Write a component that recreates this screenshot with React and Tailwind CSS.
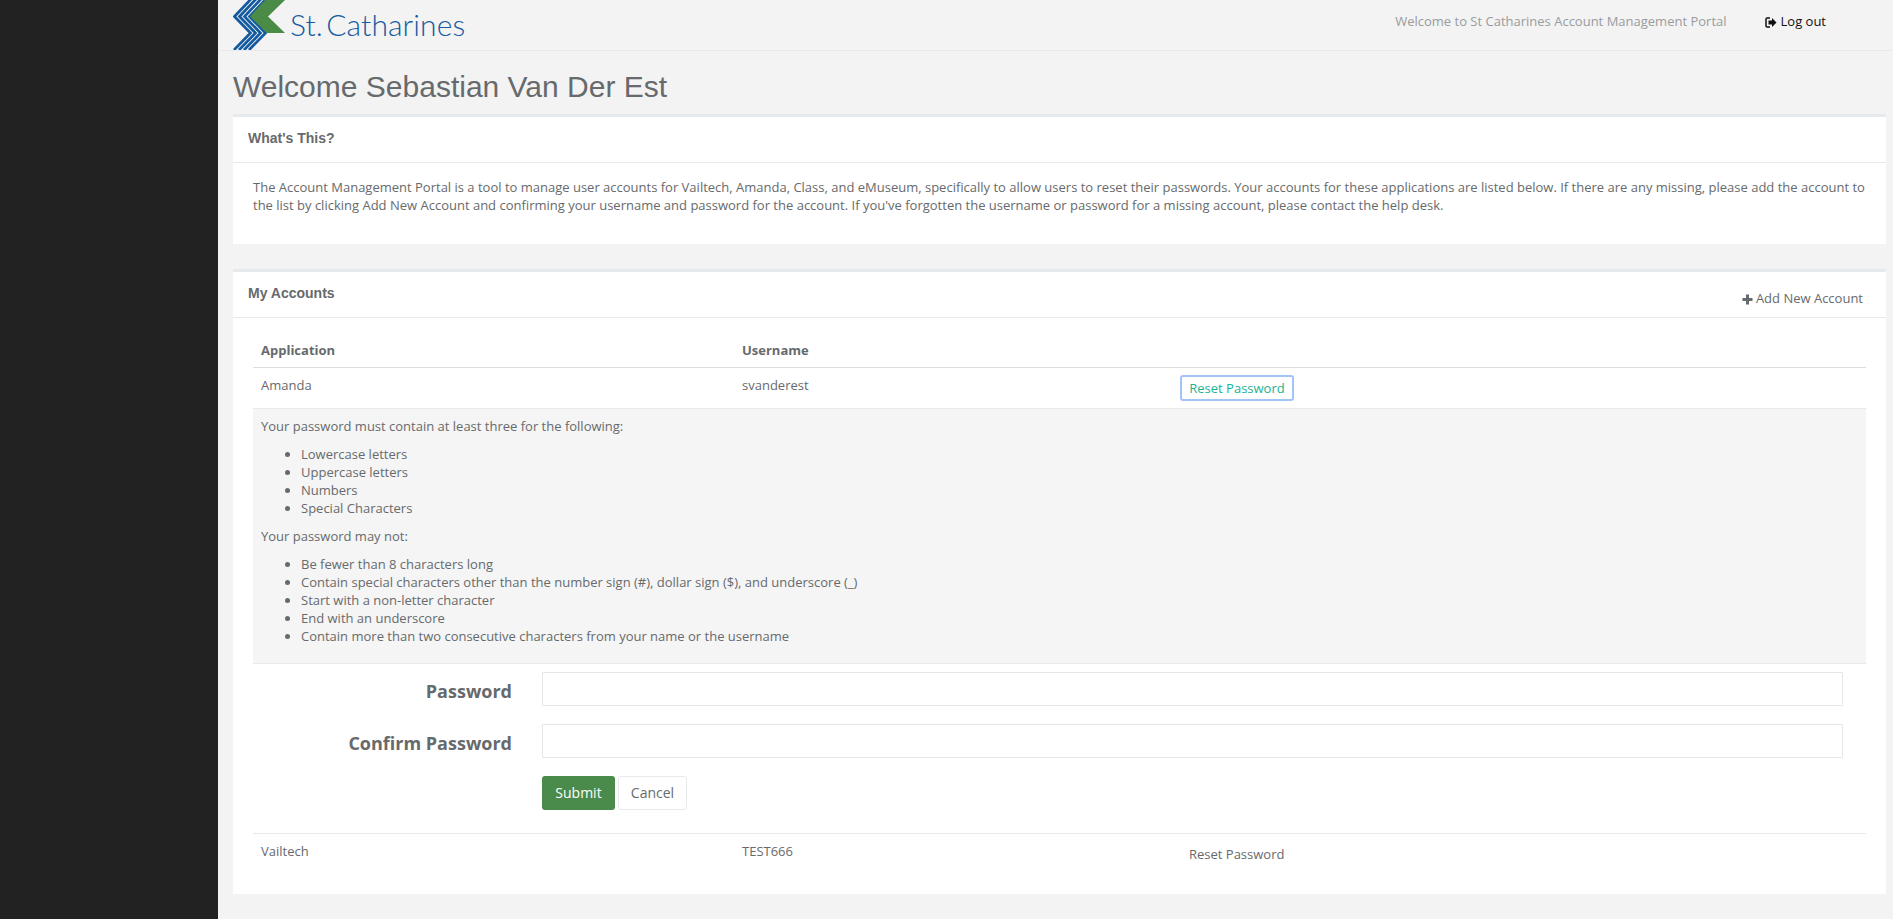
const sans = 'font-["Open_Sans",sans-serif]';

function Logo() {
  const offsets = [0, 5, 10, 15];
  return (
    <div className="flex items-center h-[50px] overflow-hidden">
      <svg width="54" height="50" viewBox="0 0 54 50" className="shrink-0">
        {offsets.map((d) => (
          <polyline
            key={d}
            points={`${19 + d},-2 ${1.5 + d},16.5 ${17.5 + d},33 ${1 + d},50`}
            fill="none"
            stroke="#135a9f"
            strokeWidth="2.7"
          />
        ))}
        <polygon points="32,0 52,0 35,16.5 52,33 34,33 17,16.5" fill="#4a8b46" />
      </svg>
      <span className={`ml-[3px] mt-[-3px] font-["Lato",sans-serif] font-light text-[30px] leading-none tracking-[0.1px] [word-spacing:-5px] text-[#135a9f]`}>St. Catharines</span>
    </div>
  );
}

function LogoutIcon() {
  return (
    <svg width="12" height="11" viewBox="0 0 12 11" className="shrink-0">
      <path d="M5 1H2.2C1.5 1 1 1.5 1 2.2v6.6C1 9.5 1.5 10 2.2 10H5" fill="none" stroke="#111" strokeWidth="1.5" />
      <path d="M3.5 3.5H7V1l4.5 4.5L7 10V7.5H3.5z" fill="#111" />
    </svg>
  );
}

function PlusIcon() {
  return (
    <svg width="11" height="11" viewBox="0 0 11 11" className="shrink-0">
      <path d="M4 0.5h3v3.5h3.5v3H7v3.5H4V7H0.5V4H4z" fill="#676a6c" />
    </svg>
  );
}

function Card({ title, action, className, children }) {
  return (
    <div className={`bg-white border-t-[3px] border-[#e7eaec] ${className}`}>
      <div className="flex justify-between h-[46px] border-b border-[#e7eaec] pl-[15px] pr-[23px]">
        <h5 className='mt-[12px] font-["Liberation_Sans",sans-serif] font-bold text-[14px] leading-[18px] text-[#676a6c]'>{title}</h5>
        {action}
      </div>
      {children}
    </div>
  );
}

const rules = ['Lowercase letters', 'Uppercase letters', 'Numbers', 'Special Characters'];
const notAllowed = [
  'Be fewer than 8 characters long',
  'Contain special characters other than the number sign (#), dollar sign ($), and underscore (_)',
  'Start with a non-letter character',
  'End with an underscore',
  'Contain more than two consecutive characters from your name or the username',
];

function BulletList({ items }) {
  return (
    <ul className="list-disc pl-[40px] mt-[10px] mb-[10px]">
      {items.map((item) => (
        <li key={item} className="leading-[18px]">{item}</li>
      ))}
    </ul>
  );
}

export default function App() {
  return (
    <div className={`flex h-[919px] overflow-hidden bg-[#f3f3f3] text-[13px] text-[#676a6c] ${sans}`}>
      <div className="w-[218px] shrink-0 bg-[#222222]" />
      <div className="flex-1 min-w-0">
        {/* Top bar */}
        <div className="flex justify-between h-[51px] border-b border-[#e7eaec] pl-[15px] pr-[67px]">
          <Logo />
          <div className="flex items-center h-[44px]">
            <span className="text-[#999c9e]">Welcome to St Catharines Account Management Portal</span>
            <span className="ml-[38px] flex items-center gap-[4px] text-[#111]">
              <LogoutIcon />
              Log out
            </span>
          </div>
        </div>

        <div className="pl-[15px] pr-[7px]">
          <h2 className='mt-[18px] mb-[9px] font-["Liberation_Sans",sans-serif] text-[30px] leading-[36px] text-[#676a6c]'>Welcome Sebastian Van Der Est</h2>

          <Card title="What's This?" className="h-[130px]">
            <p className="pt-[15px] pl-[20px] pr-[20px] leading-[18px]">
              The Account Management Portal is a tool to manage user accounts for Vailtech, Amanda, Class, and eMuseum, specifically to allow users to reset their passwords. Your accounts for these applications are listed below. If there are any missing, please add the account to the list by clicking Add New Account and confirming your username and password for the account. If you've forgotten the username or password for a missing account, please contact the help desk.
            </p>
          </Card>

          <Card
            title="My Accounts"
            className="mt-[25px] h-[625px]"
            action={
              <span className="mt-[18px] flex items-center gap-[3px] h-[18px]">
                <PlusIcon />
                Add New Account
              </span>
            }
          >
            <div className="ml-[20px] mr-[20px]">
              <div className="grid grid-cols-[481px_447px_1fr] h-[50px] items-end border-b border-[#dddddd] font-bold">
                <div className="pl-[8px] pb-[8px] leading-[18px]">Application</div>
                <div className="pl-[8px] pb-[8px] leading-[18px]">Username</div>
                <div />
              </div>

              <div className="grid grid-cols-[481px_447px_1fr] h-[41px] border-b border-[#e7eaec]">
                <div className="pl-[8px] pt-[8px] leading-[18px]">Amanda</div>
                <div className="pl-[8px] pt-[8px] leading-[18px]">svanderest</div>
                <div className="pt-[7px]">
                  <button className="-ml-px w-[114px] h-[26px] bg-white border-2 border-[#a3c4f7] rounded-[3px] text-[#1ab394] text-[13px] leading-none">Reset Password</button>
                </div>
              </div>

              <div className="h-[255px] bg-[#f5f5f5] border-b border-[#e7eaec] px-[8px] pt-[8px]">
                <p className="leading-[18px]">Your password must contain at least three for the following:</p>
                <BulletList items={rules} />
                <p className="leading-[18px]">Your password may not:</p>
                <BulletList items={notAllowed} />
              </div>

              <div className="grid grid-cols-[259px_1fr] gap-x-[30px] gap-y-[18px] pt-[8px] pr-[23px] items-center">
                <label className="text-right font-bold text-[18px] leading-[26px] pt-[4px]">Password</label>
                <input type="password" className="h-[34px] w-full bg-white border border-[#e5e6e7] rounded-[1px]" />
                <label className="text-right font-bold text-[18px] leading-[26px] pt-[4px]">Confirm Password</label>
                <input type="password" className="h-[34px] w-full bg-white border border-[#e5e6e7] rounded-[1px]" />
                <div />
                <div className="flex gap-[3px]">
                  <button className="w-[73px] h-[34px] bg-[#4a8b4c] rounded-[3px] text-white text-[14px] leading-none">Submit</button>
                  <button className="w-[69px] h-[34px] bg-white border border-[#e7eaec] rounded-[3px] text-[14px] leading-none text-[#676a6c]">Cancel</button>
                </div>
              </div>

              <div className="grid grid-cols-[481px_447px_1fr] mt-[23px] border-t border-[#e7eaec]">
                <div className="pl-[8px] pt-[8px] leading-[18px]">Vailtech</div>
                <div className="pl-[8px] pt-[8px] leading-[18px]">TEST666</div>
                <div className="pl-[8px] pt-[11px] leading-[18px]">Reset Password</div>
              </div>
            </div>
          </Card>
        </div>
      </div>
    </div>
  );
}
